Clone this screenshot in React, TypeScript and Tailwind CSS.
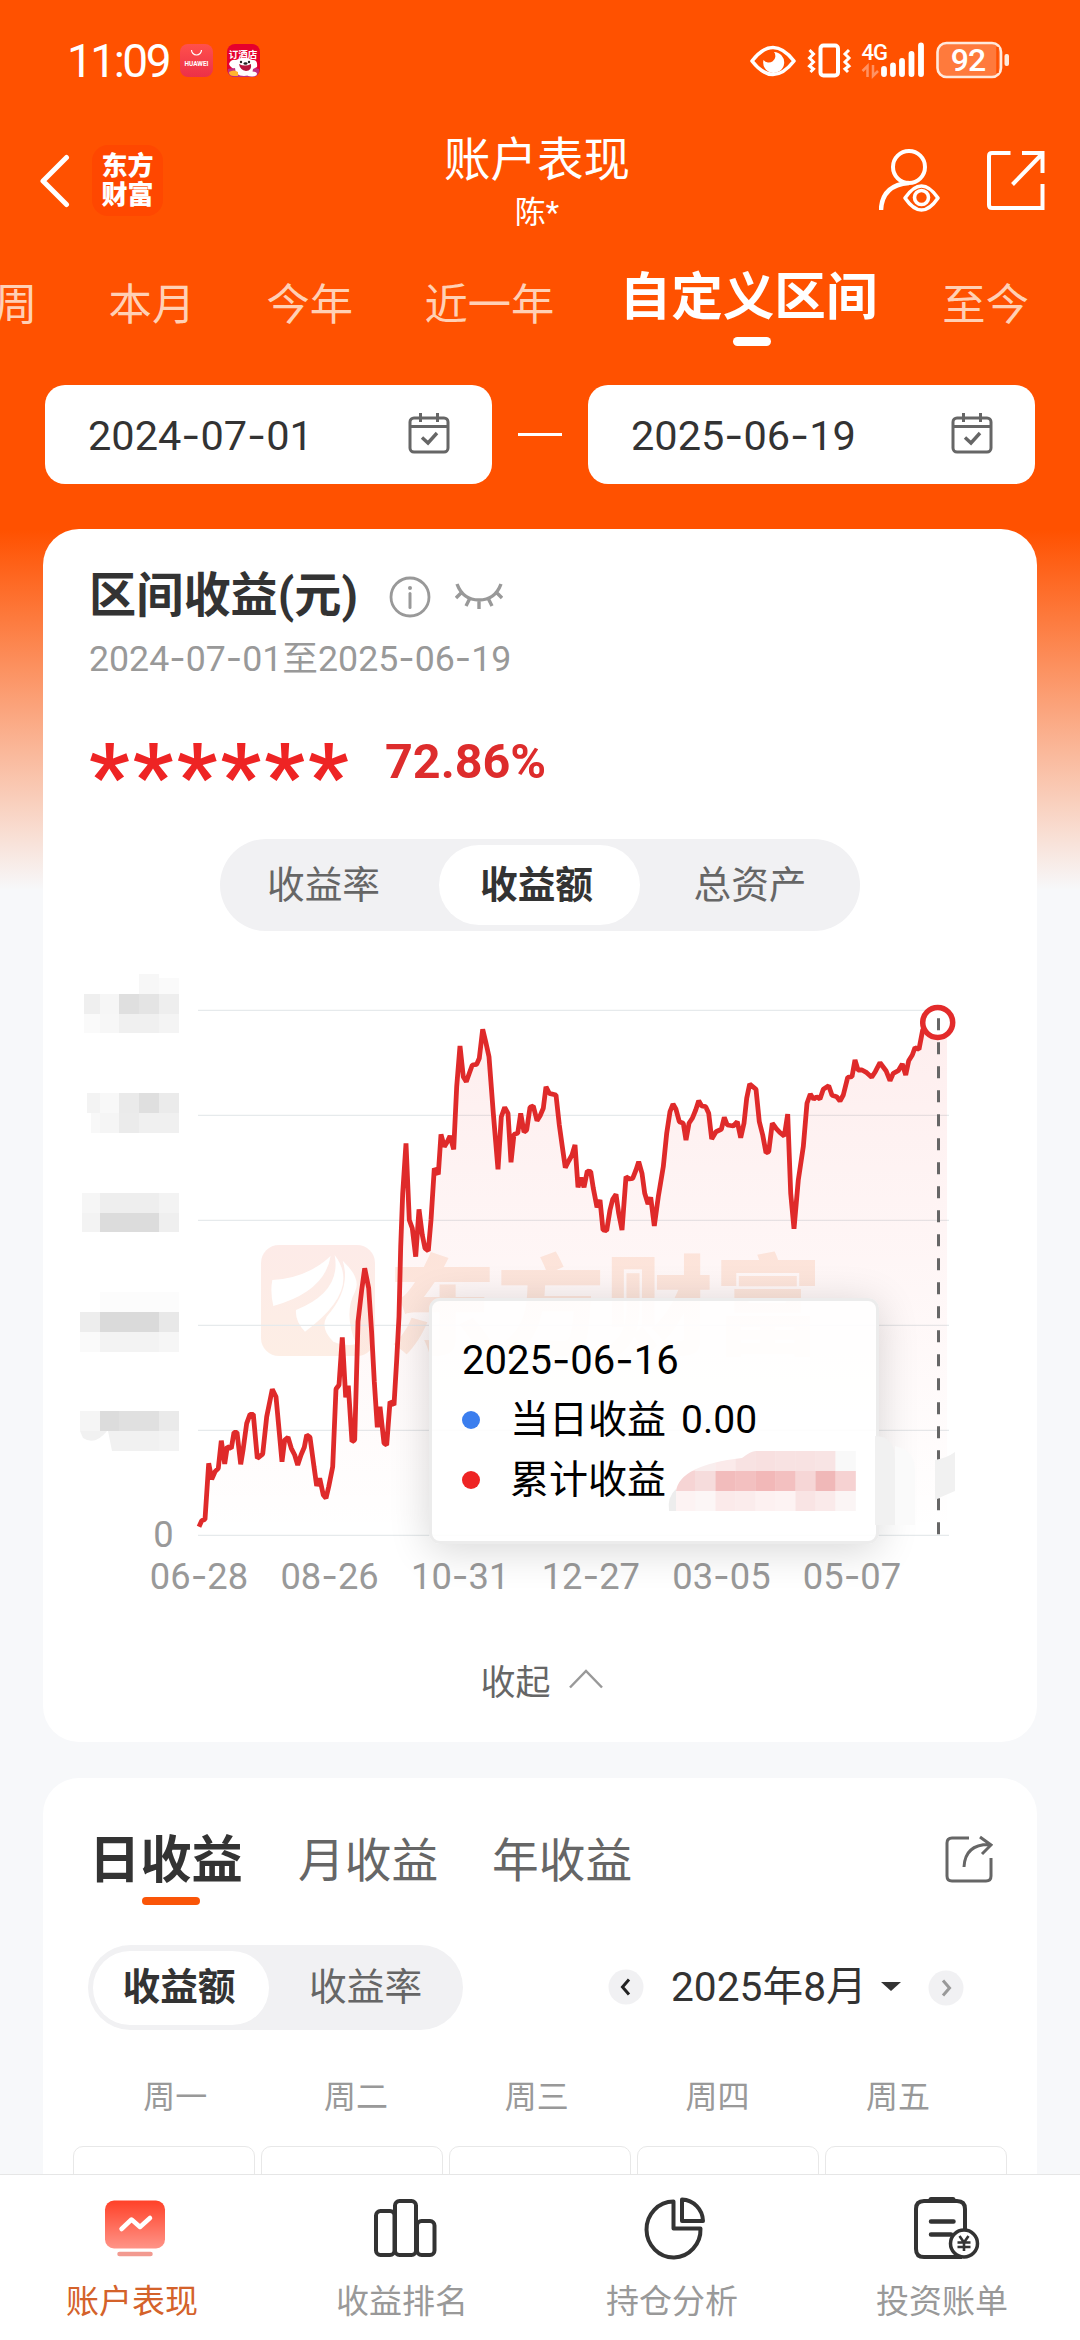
import type { ReactNode } from "react";
import clsx from "clsx";

// ── Data ──────────────────────────────────────────────────────────────────────

const PERIODS = ["周", "本月", "今年", "近一年", "自定义区间", "至今"];
const WEEKDAYS = ["周一", "周二", "周三", "周四", "周五"];
const X_LABELS = ["06-28", "08-26", "10-31", "12-27", "03-05", "05-07"];
const GRID_Y = [1010, 1115, 1220, 1325, 1430, 1535];

const LINE = `199,1526.7 201.7,1520.7 205,1519.3 208.7,1463.3 211.7,1479.3 215,1471.7 218.3,1468.3 221.3,1440.7
224.7,1464 227.3,1446.7 231.3,1448.3 234,1432.3 237,1432.3 240.7,1464.3 243.3,1448.3 246.7,1423.3 250,1414.3
253.3,1414.3 257.3,1458.3 262.7,1454 266.7,1416.7 272.3,1389.3 276,1396.7 282,1461.7 284.7,1440 288,1437.3
291.3,1448.3 294.7,1455 297.7,1465 301,1455 304.3,1447.3 306.7,1435 310,1437.3 314,1466.7 316.7,1486
319.7,1478.3 323.3,1495 326,1498.3 328.7,1486.7 332.7,1466.7 336,1389 339,1385 342.3,1337.3 345.7,1397.3
348.3,1385.7 352,1441.7 354.7,1440 358,1321.7 361.7,1290 364.7,1268.3 368.7,1288.3 371.7,1333.3 374.3,1381.7
377.3,1427.3 380,1406.7 384,1443.3 386.7,1445 390,1401.7 394,1405 396.7,1360 399,1316.7 400.7,1246.7
402.7,1193.3 406,1143.3 409.3,1220 412.3,1228.3 415.7,1256.7 419,1209.3 422.3,1235 425,1248.3 428.3,1250.7
431,1220 434.3,1168.3 438.3,1174.3 441,1134.3 444.3,1146.7 447.3,1141.7 450,1136 453.7,1149.3 456.7,1086.7
460,1046 463.3,1076.7 466.3,1081.7 469.3,1073.3 472.3,1065 476.7,1064.3 479.3,1058.3 482.7,1029.3 485.7,1041.7
489,1056.7 493.3,1113.3 498,1169.3 501.3,1116.7 504.7,1107.3 508,1113.3 511,1162.3 514,1134.3 517.7,1133.3
520.7,1113.3 524,1132 526.7,1130 530,1107.3 533.3,1106 537,1120.7 540,1116 543.3,1108.3 546,1086.7
549.3,1093.3 556,1095 559.3,1125 562.3,1146.7 565.3,1167.7 568.7,1161 572,1155 575,1145 578,1187.3 581,1177.7
584,1187.3 587.3,1171 590.7,1171.7 593.3,1188.3 597,1207.3 600,1200 603,1230 606.7,1230.7 610,1210
612.7,1199.3 616,1194.3 618.7,1213.3 622,1230 626,1176.7 629.3,1179 632.7,1178.3 636,1170 638.7,1161.7
642,1173.3 644.7,1193.3 648,1204 650.7,1197.3 654.3,1226 658.3,1196.7 663.3,1166.7 666.7,1133.3 670,1111.7
673,1104 676,1109.3 679.3,1121.7 683.3,1123.3 686,1140 689,1123.3 692.3,1118.3 695.7,1110 698.7,1100.7
701.7,1106 705.7,1106.7 708.7,1113.3 711.7,1139 716,1131.7 721.3,1129.3 724.3,1117.3 727.3,1125 733.3,1126
737.3,1121.7 740.7,1137.7 744,1123.3 746.7,1098.3 749.7,1084 756,1089.3 759.3,1121.7 762.7,1135 766,1152.7
768.7,1151.7 772.3,1123.3 776,1128.3 780,1132.7 784.3,1136 787.7,1114 790.7,1193.3 794,1228.7 798.3,1180
803.3,1146.7 807,1103.3 810.3,1094 813.7,1099.3 816.7,1096.7 820,1099 823.3,1089.3 828.7,1085.7 832,1095.3
836.7,1096.7 840,1101 843.3,1095 847.7,1077.3 852,1076.7 855,1060 858,1070 862,1070 866.7,1072.7 871.7,1077.3
875.3,1071.7 880,1062.7 886,1070.7 890,1080.7 893.3,1073.3 898.3,1070.7 902.3,1064 905.7,1075 908.7,1060.7
912.3,1055 915,1047.7 919,1049.3 922.7,1030 926.7,1025 938,1022.5`;

// Hidden axis values: [x, y, width, height, fill]
const AXIS_MASK: [number, number, number, number, string][] = [
  [139, 974, 20, 20, "#f7f7f7"], [159, 978, 20, 16, "#fafafa"],
  [84, 994, 16, 20, "#efefef"], [100, 994, 19, 20, "#f6f6f6"], [119, 994, 20, 20, "#dfdfdf"], [139, 994, 20, 20, "#e4e4e4"], [159, 994, 20, 20, "#eeeeee"],
  [84, 1014, 16, 19, "#fafafa"], [100, 1014, 19, 19, "#f7f7f7"], [119, 1014, 40, 19, "#f0f0f0"], [159, 1014, 20, 19, "#f4f4f4"],
  [87, 1093, 13, 20, "#f3f3f3"], [100, 1093, 19, 20, "#f8f8f8"], [119, 1093, 20, 20, "#eaeaea"], [139, 1093, 20, 20, "#dfdfdf"], [159, 1093, 20, 20, "#ebebeb"],
  [91, 1113, 9, 20, "#f8f8f8"], [100, 1113, 19, 20, "#f5f5f5"], [119, 1113, 20, 20, "#ebebeb"], [139, 1113, 40, 20, "#f0f0f0"],
  [82, 1193, 18, 20, "#f6f6f6"], [100, 1193, 59, 20, "#eeeeee"], [159, 1193, 20, 20, "#f3f3f3"],
  [82, 1213, 18, 19, "#f3f3f3"], [100, 1213, 59, 19, "#dcdcdc"], [159, 1213, 20, 19, "#efefef"],
  [100, 1292, 79, 20, "#fcfcfc"],
  [80, 1312, 20, 20, "#ededed"], [100, 1312, 59, 20, "#dadada"], [159, 1312, 20, 20, "#e8e8e8"],
  [80, 1332, 20, 20, "#fafafa"], [100, 1332, 59, 20, "#f3f3f3"], [159, 1332, 20, 20, "#f6f6f6"],
  [80, 1411, 20, 20, "#f5f5f5"], [100, 1411, 19, 20, "#dcdcdc"], [119, 1411, 40, 20, "#e0e0e0"], [159, 1411, 20, 20, "#eaeaea"],
];

const VALUE_MASK = [
  ["#fbe4e4", "#f9eeee", "#fbeaea", "#f8e2e2", "#f8e0e0", "#f8e2e2", "#f8e2e2", "#f8e4e4", "#f9f9f9"],
  ["#f6d4d4", "#f6dcdc", "#f2bcbc", "#f3c0c0", "#f2b8b8", "#f3c0c0", "#f6d6d6", "#f0b8b8", "#f6d2d2"],
  ["#fdf3f3", "#fcf6f6", "#fbeaea", "#fbecec", "#fdf1f1", "#fdf3f3", "#f9e4e4", "#faeaea", "#fbf5f5"],
];

// ── Helpers ───────────────────────────────────────────────────────────────────

// Dates are set with a wider hyphen than the digits' own face has
function DateText({ value }: { value: string }) {
  return (
    <>
      {value.split("-").map((part, i) => (
        <span key={i}>
          {i > 0 && <span className="font-['Inter']">-</span>}
          {part}
        </span>
      ))}
    </>
  );
}

// ── Status bar ────────────────────────────────────────────────────────────────

function StatusBar() {
  return (
    <div className="flex h-[121px] shrink-0 items-center pl-[67px] pr-[70px] text-white">
      <span className="w-[113px] text-[46px] leading-none tracking-[-2.5px]">11:09</span>
      <svg width="33" height="33" viewBox="0 0 33 33">
        <defs>
          <linearGradient id="store" x1="0" y1="0" x2="0" y2="1">
            <stop offset="0" stopColor="#ff504c" />
            <stop offset="1" stopColor="#ec3048" />
          </linearGradient>
        </defs>
        <rect width="33" height="33" rx="8" fill="url(#store)" />
        <path d="M11.5 6a5 5 0 0 0 10 0" fill="none" stroke="#fff" strokeWidth="1.2" />
        <text x="16.5" y="21.5" fontSize="6.4" fontWeight="700" fill="#fff" textAnchor="middle">HUAWEI</text>
      </svg>
      <svg width="33" height="33" viewBox="0 0 33 33" className="ml-[14px]">
        <rect width="33" height="33" rx="8" fill="#e6002d" />
        <path d="M1 25q15-5 31 0v2a6 6 0 0 1-6 6H7a6 6 0 0 1-6-6z" fill="#c0307e" />
        <text x="16" y="14" fontSize="9.5" fontWeight="700" fill="#fff" textAnchor="middle">订酒店</text>
        <path d="M2 20q2-5 7-4q8-5 16 0q6-1 5 7l-4 2q0 7-9 7t-9-8q-4 1-6-4z" fill="#fff" />
        <path d="M12 20q6 3 12 0q1 7-5 7q-6-1-7-7z" fill="#b8143c" />
        <circle cx="14" cy="18" r="1.2" fill="#222" />
        <circle cx="22" cy="18" r="1.2" fill="#222" />
        <ellipse cx="18.5" cy="19.5" rx="2" ry="1.3" fill="#222" />
        <path d="M2 28q5-3 9 0v4H7q-5 0-5-4z" fill="#ffb52e" />
        <ellipse cx="25" cy="30" rx="5" ry="2.5" fill="#fff" />
      </svg>
      <svg width="260" height="40" viewBox="750 41 260 40" className="ml-auto" fill="none">
        {/* eye comfort */}
        <path d="M752 61Q773 34 794 61Q773 88 752 61Z" stroke="#fff" strokeWidth="3.6" strokeLinejoin="round" />
        <path d="M774 52a10.5 10.5 0 1 1-10.5 8a6 6 0 0 0 10.5-8z" fill="#fff" />
        {/* vibrate */}
        <rect x="820.5" y="45.500" width="17.500" height="30" rx="3" stroke="#fff" strokeWidth="4" />
        <path d="M809.5 50l4 4-4 4 4 4-4 4 4 3-3 3M849 50l-4 4 4 4-4 4 4 4-4 3 3 3" stroke="#fff" strokeWidth="3" />
        <text x="861.5" y="59.5" fontSize="22" fontWeight="500" letterSpacing="-1" fill="#fff">4G</text>
        <path d="M867.5 77V66l-5 5M873 65v11l5-5" stroke="#ff9263" strokeWidth="2.5" />
        <path d="M884 69v5M893 65.5v8.5M902 61v13M911.5 54v20M921 45.5v28.5" stroke="#fff" strokeWidth="5.8" strokeLinecap="round" />
        {/* battery */}
        <rect x="937.5" y="43" width="63.5" height="34" rx="9" fill="#ff7a3c" stroke="#ffe9dc" strokeWidth="2.6" />
        <path d="M997.5 47v26" stroke="#ff5100" strokeWidth="2.5" />
        <rect x="1004.5" y="54" width="4.5" height="12" rx="2" fill="#ffe9dc" />
        <text x="968" y="71" fontSize="32" fontWeight="500" letterSpacing="-1" fill="#fff" textAnchor="middle">92</text>
      </svg>
    </div>
  );
}

// ── Title bar ─────────────────────────────────────────────────────────────────

function TitleBar() {
  return (
    <div className="relative flex h-[119px] shrink-0 items-center justify-between pl-[40px] pr-[35px] text-white">
      <div className="flex items-center">
        <svg width="30" height="54" viewBox="0 0 30 54" fill="none" stroke="#fff" strokeWidth="5" strokeLinecap="round" strokeLinejoin="round">
          <path d="M26.5 3.5L3 27l23.5 23.5" />
        </svg>
        <div className="ml-[22px] flex h-[71px] w-[71px] flex-col items-center justify-center rounded-[16px] bg-[#ff4700] text-[26px] font-black leading-[29px]">
          <span>东方</span>
          <span>财富</span>
        </div>
      </div>
      <div className="absolute inset-x-0 top-[8px] flex flex-col items-center pr-[6px]">
        <h1 className="text-[46.5px] font-normal leading-[62px]">账户表现</h1>
        <p className="text-[31px] leading-[44px]">陈*</p>
      </div>
      <svg width="166" height="66" viewBox="879 148 166 66" fill="none" stroke="#fff">
        <circle cx="909" cy="167" r="16" strokeWidth="4" />
        <path d="M881 210q1-25 28-27" strokeWidth="4.5" />
        <path d="M905 198q16.5-24 33 0q-16.5 24-33 0z" strokeWidth="3.6" strokeLinejoin="round" />
        <circle cx="921.5" cy="197.5" r="7" strokeWidth="3.6" />
        <path d="M1010.5 153H992q-3 0-3 3v49q0 3 3 3h50.5V184M1022 153h20.5v20M1042 154l-29.5 30.5" strokeWidth="4" />
      </svg>
    </div>
  );
}

function PeriodTabs() {
  return (
    <div className="-ml-[6px] flex h-[145px] shrink-0 gap-[71.3px] whitespace-nowrap text-[43.3px] text-[#ffd0b5]">
      {PERIODS.map((p) =>
        p === "自定义区间" ? (
          <div key={p} className="-ml-[6px] -mr-[6.5px] flex flex-col items-center pt-[21px] text-[51.6px] font-bold leading-[74px] text-white">
            {p}
            <span className="ml-[6px] mt-[2px] h-[9px] w-[38px] rounded-full bg-white" />
          </div>
        ) : (
          <span key={p} className="pt-[34px] leading-[64px]">{p}</span>
        ),
      )}
    </div>
  );
}

function DateBox({ value }: { value: string }) {
  return (
    <div className="flex h-[99px] w-[447px] items-center justify-between rounded-[20px] bg-white pl-[43px] pr-[42px]">
      <span className="pt-[2px] text-[41.5px] text-[#333]"><DateText value={value} /></span>
      <svg width="42" height="42" viewBox="0 0 42 42" fill="none" stroke="#666" strokeWidth="3" className="-mt-[3px]">
        <rect x="2" y="6" width="38" height="34" rx="4" />
        <path d="M2 14.5h38M12.5 1v9M29.5 1v9" />
        <path d="M14 25.5l6 5.5 9-10" strokeWidth="3.4" />
      </svg>
    </div>
  );
}

// ── Profit chart ──────────────────────────────────────────────────────────────

function ProfitChart() {
  return (
    <div className="relative h-[709px]">
      <svg width="994" height="709" viewBox="43 931 994 709" fill="none">
        <defs>
          <linearGradient id="area" x1="0" y1="1010" x2="0" y2="1535" gradientUnits="userSpaceOnUse">
            <stop offset="0" stopColor="#f02828" stopOpacity="0.08" />
            <stop offset="1" stopColor="#f02828" stopOpacity="0" />
          </linearGradient>
          <linearGradient id="mark" x1="0" y1="0" x2="0" y2="1">
            <stop offset="0" stopColor="#fdebe8" />
            <stop offset="1" stopColor="#fdeee5" />
          </linearGradient>
        </defs>

        {/* Watermark */}
        <rect x="261" y="1245" width="114" height="111" rx="18" fill="url(#mark)" />
        <g transform="translate(60 1200) scale(.33333)" fill="#fff">
          <path d="M812 168Q795 275 640 318Q630 275 637 240Q740 235 812 168Z" />
          <path d="M824 165Q905 270 735 395Q705 365 708 330Q845 275 824 165Z" />
          <path d="M848 182Q905 235 885 275Q850 340 888 432Q860 440 820 425Q780 385 800 350Q875 265 848 182Z" />
        </g>
        <text x="388" y="1346" fontSize="108" fontWeight="900" fill="#fdece2" textLength="434">东方财富</text>

        {GRID_Y.map((y) => (
          <path key={y} d={`M198 ${y + 0.3}H949`} stroke="#e6eaec" strokeWidth="1.3" />
        ))}
        <polygon points={`${LINE} 947,1022 947,1535 199,1535`} fill="url(#area)" />
        <polyline points={LINE} stroke="#df2a2a" strokeWidth="4.8" strokeLinejoin="bevel" />

        {AXIS_MASK.map(([x, y, w, h, fill]) => (
          <rect key={`${x}-${y}`} x={x} y={y} width={w} height={h} fill={fill} />
        ))}
        <path d="M80 1431h27q-12 15-24 7zM108 1431h51v20h-47z" fill="#f1f1f1" />
        <path d="M159 1431h20v20h-20z" fill="#f3f3f3" />

        <circle cx="937.7" cy="1022.5" r="15" fill="#fff" stroke="#e32b2b" strokeWidth="5.5" />
        <path d="M938.5 1018.300V1535" stroke="#666" strokeWidth="3" strokeDasharray="12 12" />

        <g fontSize="36.3" fill="#999" textAnchor="middle">
          <text x="163.5" y="1546.5">0</text>
          {X_LABELS.map((label, i) => (
            <text key={label} x={199 + i * 130.6} y="1588.5">
              {label.slice(0, 2)}
              <tspan className="font-['Inter']">-</tspan>
              {label.slice(3)}
            </text>
          ))}
        </g>
      </svg>

      {/* Tooltip */}
      <div className="absolute left-[386px] top-[367px] h-[246px] w-[450px] rounded-[11px] border-[3px] border-[#ececec] bg-white/90 pl-[30px] pt-[29px] text-[39px] text-black shadow-[0_6px_40px_rgba(0,0,0,0.16)]">
        <div className="h-[60px] text-[40px] leading-[60px]"><DateText value="2025-06-16" /></div>
        <div className="flex h-[60px] items-center">
          <span className="mr-[30px] size-[18px] rounded-full bg-[#3b7eee]" />
          当日收益<span className="ml-[15px] text-[39px]">0.00</span>
        </div>
        <div className="flex h-[60px] items-center">
          <span className="mr-[30px] size-[18px] rounded-full bg-[#ee2424]" />
          累计收益
        </div>
      </div>
      <svg width="300" height="100" viewBox="660 1430 300 100" className="absolute left-[617px] top-[499px]">
        <defs>
          <clipPath id="smear">
            <path d="M676 1511v-20q4-26 66-33q10-8 15-7h100v60z" />
          </clipPath>
        </defs>
        <path d="M669 1511q-2-14 7-22v22z" fill="#ededed" />
        <g clipPath="url(#smear)">
          {VALUE_MASK.map((row, r) =>
            row.map((fill, c) => (
              <rect key={`${r}-${c}`} x={675.5 + c * 20} y={1451 + r * 20} width="20.3" height="20" fill={fill} />
            )),
          )}
        </g>
        <path d="M875 1436q20 0 20 24v65h-20z" fill="#f1f1f1" />
        <path d="M895 1446q20 5 20 24v55h-20z" fill="#fafafa" />
        <path d="M935 1460q12-2 20-8v39l-14 6-6 3z" fill="#f1f1f1" />
      </svg>
    </div>
  );
}

function ProfitCard() {
  return (
    <section className="mx-[43px] mt-[45px] flex h-[1213px] shrink-0 flex-col rounded-[36px] bg-white pt-[36px]">
      <div className="flex h-[64px] items-center pl-[46px]">
        <h2 className="text-[47.2px] font-bold leading-none text-[#333]">区间收益(元)</h2>
        <svg width="42" height="42" viewBox="0 0 42 42" fill="none" stroke="#999" className="ml-[31px]">
          <circle cx="21" cy="21" r="19" strokeWidth="2.8" />
          <path d="M21 17.5v14" strokeWidth="3" strokeLinecap="round" />
          <circle cx="21" cy="12" r="2" fill="#999" stroke="none" />
        </svg>
        <svg width="48" height="30" viewBox="0 0 48 30" fill="none" stroke="#999" strokeWidth="3.4" className="ml-[24px]">
          <path d="M2 2q6 16 22 16t22-16M6 11l-5 5M42 11l5 5M15 16l-4 8M33 16l4 8M24 18v9" />
        </svg>
      </div>
      <p className="h-[60px] pl-[46px] text-[35.7px] leading-[59px] text-[#999]">
        <DateText value="2024-07-01" />至<DateText value="2025-06-19" />
      </p>
      <div className="flex h-[150px] items-center pl-[46px] text-[#dd2c2c]">
        <span className="w-[296px] pt-[22px] text-[89px] font-bold leading-none tracking-[3.4px] text-[#ee2424]">******</span>
        <span className="-mt-[3px] text-[48.5px] font-bold">72.86%</span>
      </div>
      <div className="mx-auto flex h-[92px] w-[640px] items-center rounded-full bg-[#f1f1f3] text-[37.7px] text-[#666]">
        <span className="w-[213px] pr-[6px] text-center">收益率</span>
        <span className="mx-[6px] flex h-[80px] w-[201px] items-center justify-center rounded-full bg-white pr-[6px] font-bold text-[#333]">收益额</span>
        <span className="w-[213px] pr-[5px] text-center">总资产</span>
      </div>
      <ProfitChart />
      <div className="flex h-[88px] items-center justify-center pl-[3px] text-[35px] text-[#666]">
        收起
        <svg width="34" height="20" viewBox="0 0 34 20" fill="none" stroke="#999" strokeWidth="2.5" className="-mt-[10px] ml-[18px]">
          <path d="M1 18.5L17 2l16 16.5" />
        </svg>
      </div>
    </section>
  );
}

// ── Daily calendar ────────────────────────────────────────────────────────────

function RoundArrow({ flip = false }: { flip?: boolean }) {
  return (
    <svg width="36" height="36" viewBox="0 0 36 36" fill="none" className={clsx(flip && "rotate-180")}>
      <circle cx="18" cy="18" r="17.5" fill="#f1f1f3" />
      <path d="M21 10.5L14.5 18l6.500 7.500" stroke={flip ? "#999" : "#222"} strokeWidth="3" />
    </svg>
  );
}

function CalendarCard() {
  return (
    <section className="mx-[43px] mt-[36px] h-[600px] shrink-0 rounded-[36px] bg-white">
      <div className="flex h-[167px] items-start pl-[46px] pr-[44px] pt-[51px] text-[46.7px] leading-[64px] text-[#666]">
        <div className="flex w-[162px] flex-col text-[51.3px] font-bold text-[#333]">
          <span>日收益</span>
          <span className="ml-[53px] mt-[4px] h-[8px] w-[58px] rounded-full bg-[#fa5508]" />
        </div>
        <span className="ml-[47px]">月收益</span>
        <span className="ml-[54px]">年收益</span>
        <svg width="48" height="48" viewBox="0 0 48 48" fill="none" stroke="#666" strokeWidth="3" className="ml-auto mt-[6px]">
          <path d="M24 3H7Q2 3 2 8v33q0 5 5 5h34q5 0 5-5V23" />
          <path d="M35 2l11 8-9 9M45 9.5Q20 9 19 32" />
        </svg>
      </div>
      <div className="flex h-[85px] items-center pl-[45px]">
        <div className="flex h-[85px] w-[375px] items-center rounded-full bg-[#f1f1f3] pl-[5px] text-[37.7px] text-[#666]">
          <span className="flex h-[74px] w-[176px] items-center justify-center rounded-full bg-white pr-[4px] font-bold text-[#333]">收益额</span>
          <span className="ml-[40px]">收益率</span>
        </div>
        <div className="ml-[145px] flex items-center">
          <RoundArrow />
          <span className="ml-[27px] text-[40.7px] text-[#333]">2025年8月</span>
          <svg width="20" height="10" viewBox="0 0 20 10" className="ml-[14px]">
            <path d="M0 0h20l-10 9z" fill="#333" />
          </svg>
        </div>
        <span className="ml-[27px]"><RoundArrow flip /></span>
      </div>
      <div className="ml-[42px] mt-[43px] flex text-[32px] leading-[48px] text-[#999]">
        {WEEKDAYS.map((d) => (
          <span key={d} className="w-[180.7px] text-center">{d}</span>
        ))}
      </div>
      <div className="ml-[30px] mt-[25px] flex gap-[6px]">
        {WEEKDAYS.map((d) => (
          <div key={d} className="h-[120px] w-[182px] rounded-[10px] border border-[#e8e8e8]" />
        ))}
      </div>
    </section>
  );
}

// ── Bottom navigation ─────────────────────────────────────────────────────────

function NavItem({ label, active = false, children }: { label: string; active?: boolean; children: ReactNode }) {
  return (
    <div className={clsx("flex w-[270px] flex-col items-center pt-[19px] text-[33px] leading-[48px]", active ? "text-[#d4622a]" : "text-[#999]")}>
      <svg width="70" height="70" viewBox="0 0 70 70" fill="none" stroke="#333" strokeWidth="4">
        {children}
      </svg>
      <span className="mt-[14px] pr-[6px]">{label}</span>
    </div>
  );
}

function BottomNav() {
  return (
    <nav className="flex h-[166px] shrink-0 border-t border-[#e6e6e6] bg-white">
      <NavItem label="账户表现" active>
        <defs>
          <linearGradient id="screen" x1="0" y1="0" x2="0" y2="1">
            <stop offset="0" stopColor="#ff4128" />
            <stop offset="1" stopColor="#ff9488" />
          </linearGradient>
        </defs>
        <rect x="5" y="6.500" width="60" height="48" rx="9" fill="url(#screen)" stroke="none" />
        <path d="M21.5 35l10-9.5 8.500 7.500 10-9" stroke="#fff" strokeWidth="4.5" strokeLinecap="round" strokeLinejoin="round" />
        <path d="M19.5 60h31" stroke="#f29a90" strokeWidth="4.5" strokeLinecap="round" />
      </NavItem>
      <NavItem label="收益排名">
        <rect x="6" y="17" width="18.5" height="44" rx="4.5" />
        <rect x="25" y="7" width="21" height="54" rx="4.5" />
        <rect x="47" y="27" width="17.500" height="34" rx="4.5" />
      </NavItem>
      <NavItem label="持仓分析">
        <path d="M33.5 7.500A27 28 0 1 0 60.500 34.500H33.500Z" strokeLinejoin="round" />
        <path d="M42 5.500A22 22 0 0 1 63 27H42Z" strokeLinejoin="round" />
      </NavItem>
      <NavItem label="投资账单">
        <path d="M55 36V15q0-8-8-8H14Q6 7 6 15v40q0 8 8 8h38" />
        <path d="M21 5.500h22" strokeWidth="5" strokeLinecap="round" />
        <path d="M21 27.500h22.500M21 40.500h20" strokeWidth="4.5" strokeLinecap="round" />
        <circle cx="54" cy="49.5" r="13.5" fill="#fff" strokeWidth="3.5" />
        <path d="M49.500 42l4.500 6.500 4.500-6.500M54 48v9M47.500 48.500h13M47.500 53h13" strokeWidth="2.6" />
      </NavItem>
    </nav>
  );
}

export default function App() {
  return (
    <div className="flex h-[2340px] w-[1080px] flex-col overflow-hidden bg-[#f7f8fa] font-['Roboto','Noto_Sans_CJK_SC',sans-serif]">
      <div className="flex min-h-0 flex-1 flex-col overflow-hidden bg-[linear-gradient(180deg,#ff5100_0px,#ff5100_530px,#f7f8fa_890px)]">
        <StatusBar />
        <TitleBar />
        <PeriodTabs />
        <div className="flex shrink-0 items-center px-[45px]">
          <DateBox value="2024-07-01" />
          <span className="mx-[26px] h-[2.5px] w-[44px] bg-white" />
          <DateBox value="2025-06-19" />
        </div>
        <ProfitCard />
        <CalendarCard />
      </div>
      <BottomNav />
    </div>
  );
}
